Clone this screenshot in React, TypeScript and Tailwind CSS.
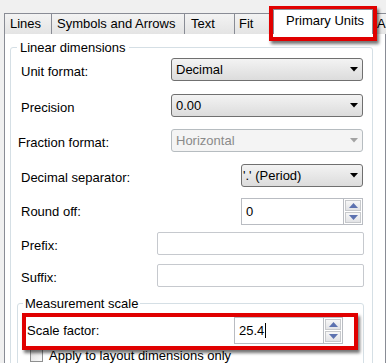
import type { ReactNode } from 'react';

const FONT = { fontFamily: '"Liberation Sans", Arial, sans-serif' };

const Arrow = ({ disabled }: { disabled?: boolean }) => (
  <svg width="8" height="5" viewBox="0 0 8 5" className="shrink-0">
    <path d="M0 0 L8 0 L4 4.5 Z" fill={disabled ? '#a3a3a3' : '#000'} />
  </svg>
);

const Select = ({ value, className, disabled, textClass }: { value: string; className: string; disabled?: boolean; textClass?: string }) => (
  <div
    className={`flex items-center h-[23px] rounded-[3px] border pr-[4px] ${
      disabled
        ? 'border-[#b6bcc0] bg-[#f4f4f4] text-[#8a8a8a]'
        : 'border-[#707070] bg-gradient-to-b from-[#f3f3f3] to-[#dcdcdc] text-black'
    } ${className}`}
  >
    <span className={`flex-1 leading-[15px] ${textClass ?? 'pl-[4px]'}`}>{value}</span>
    <Arrow disabled={disabled} />
  </div>
);

const SpinArrow = ({ up }: { up?: boolean }) => (
  <svg width="9" height="5" viewBox="0 0 9 5">
    <path d={up ? 'M0 5 L9 5 L4.5 0 Z' : 'M0 0 L9 0 L4.5 5 Z'} fill="#5d72b0" />
  </svg>
);

const Spinner = ({ value, className, caret }: { value: string; className: string; caret?: boolean }) => (
  <div className={`flex h-[27px] ${className}`}>
    <div className="flex-1 flex items-start pt-[5px] pl-[4px] border border-[#b9bcc2] border-r-0 bg-white leading-[15px]">
      {value}
      {caret && <span className="inline-block w-px h-[15px] bg-black ml-px" />}
    </div>
    <div className="flex flex-col w-[20px] border border-[#b9bcc2] bg-white">
      <div className="flex-1 flex items-center justify-center m-px mb-0 border border-[#c7c9cc] bg-gradient-to-b from-[#f7f7f7] to-[#e2e3e6]">
        <SpinArrow up />
      </div>
      <div className="flex-1 flex items-center justify-center m-px border border-[#c7c9cc] bg-gradient-to-b from-[#f7f7f7] to-[#e2e3e6]">
        <SpinArrow />
      </div>
    </div>
  </div>
);

const Row = ({ label, labelClass, mt, children }: { label: string; labelClass?: string; mt: string; children: ReactNode }) => (
  <div className={`flex items-start ${mt}`}>
    <span className={`pt-[6px] leading-[15px] whitespace-nowrap ${labelClass ?? 'pl-[10px]'}`}>{label}</span>
    <div className="flex-1 flex justify-end">{children}</div>
  </div>
);

const Tab = ({ label, w, pl }: { label: string; w: string; pl: string }) => (
  <div
    className={`shrink-0 h-[21px] ${w} ${pl} -ml-px border border-b-0 border-[#898c95] bg-gradient-to-b from-[#f3f3f3] to-[#e4e4e4] leading-[19px] whitespace-nowrap overflow-hidden`}
  >
    {label}
  </div>
);

export default function App() {
  return (
    <div className="relative w-[386px] h-[363px] overflow-hidden bg-[#f0f0f0] text-[13px] text-black" style={FONT}>
      {/* tab strip */}
      <div className="flex items-end h-[34px] pl-[5px]">
        <Tab label="Lines" w="w-[48px]" pl="pl-[5px]" />
        <Tab label="Symbols and Arrows" w="w-[134px]" pl="pl-[5px]" />
        <Tab label="Text" w="w-[51px]" pl="pl-[6px]" />
        <Tab label="Fit" w="w-[40px]" pl="pl-[4px]" />
        <div className="shrink-0 relative z-10 h-[25px] w-[100px] -ml-px border border-b-0 border-[#898c95] bg-white pl-[12px] pt-[3px] leading-[15px] whitespace-nowrap">
          Primary Units
        </div>
        <Tab label="Alternate Units" w="w-[100px]" pl="pl-[4px]" />
      </div>

      {/* tab page */}
      <div className="-mt-px ml-[4px] h-[340px] border border-[#898c95] bg-white">
        <fieldset className="ml-[5px] mr-[12px] mt-[6px] border border-[#d5dfe5] rounded-[3px] pb-[10px]">
          <legend className="ml-[6px] px-[3px] leading-[15px]">Linear dimensions</legend>

          <Row label="Unit format:" mt="mt-[3px]">
            <Select value="Decimal" className="w-[192px] mr-[9px]" />
          </Row>
          <Row label="Precision" mt="mt-[13px]">
            <Select value="0.00" className="w-[192px] mr-[9px]" />
          </Row>
          <Row label="Fraction format:" labelClass="pl-[7px]" mt="mt-[12px]">
            <Select value="Horizontal" disabled className="w-[192px] mr-[9px]" />
          </Row>
          <Row label="Decimal separator:" mt="mt-[12px]">
            <Select value="'.' (Period)" textClass="pl-[1px]" className="w-[122px] mr-[9px]" />
          </Row>
          <Row label="Round off:" mt="mt-[11px]">
            <Spinner value="0" className="w-[122px] mr-[9px]" />
          </Row>
          <Row label="Prefix:" mt="mt-[7px]">
            <div className="w-[207px] h-[23px] mr-[8px] border border-[#c6c9ce] rounded-[2px] bg-white" />
          </Row>
          <Row label="Suffix:" mt="mt-[9px]">
            <div className="w-[207px] h-[23px] mr-[8px] border border-[#c6c9ce] rounded-[2px] bg-white" />
          </Row>

          <fieldset className="ml-[6px] mr-[8px] mt-[9px] border border-[#d5dfe5] rounded-[3px] pb-[6px]">
            <legend className="ml-[5px] px-[2px] leading-[15px]">Measurement scale</legend>
            <Row label="Scale factor:" labelClass="pl-[9px]" mt="mt-[6px]">
              <Spinner value="25.4" caret className="w-[109px] mr-[20px]" />
            </Row>
            <div className="flex items-center mt-[4px] pl-[12px]">
              <span className="w-[13px] h-[13px] border border-[#8e8f8f] bg-gradient-to-br from-[#dcdcdc] to-[#fbfbfb]" />
              <span className="ml-[6px] leading-[15px]">Apply to layout dimensions only</span>
            </div>
          </fieldset>
        </fieldset>
      </div>

      {/* red highlight annotations */}
      <div className="absolute left-[269px] top-[6px] w-[108px] h-[35px] border-[4px] border-[#e00000] shadow-[2px_3px_3px_rgba(0,0,0,0.55)]" />
      <div className="absolute left-[22px] top-[313px] w-[336px] h-[37px] border-[4px] border-[#e00000] shadow-[2px_3px_3px_rgba(0,0,0,0.55)]" />
    </div>
  );
}
